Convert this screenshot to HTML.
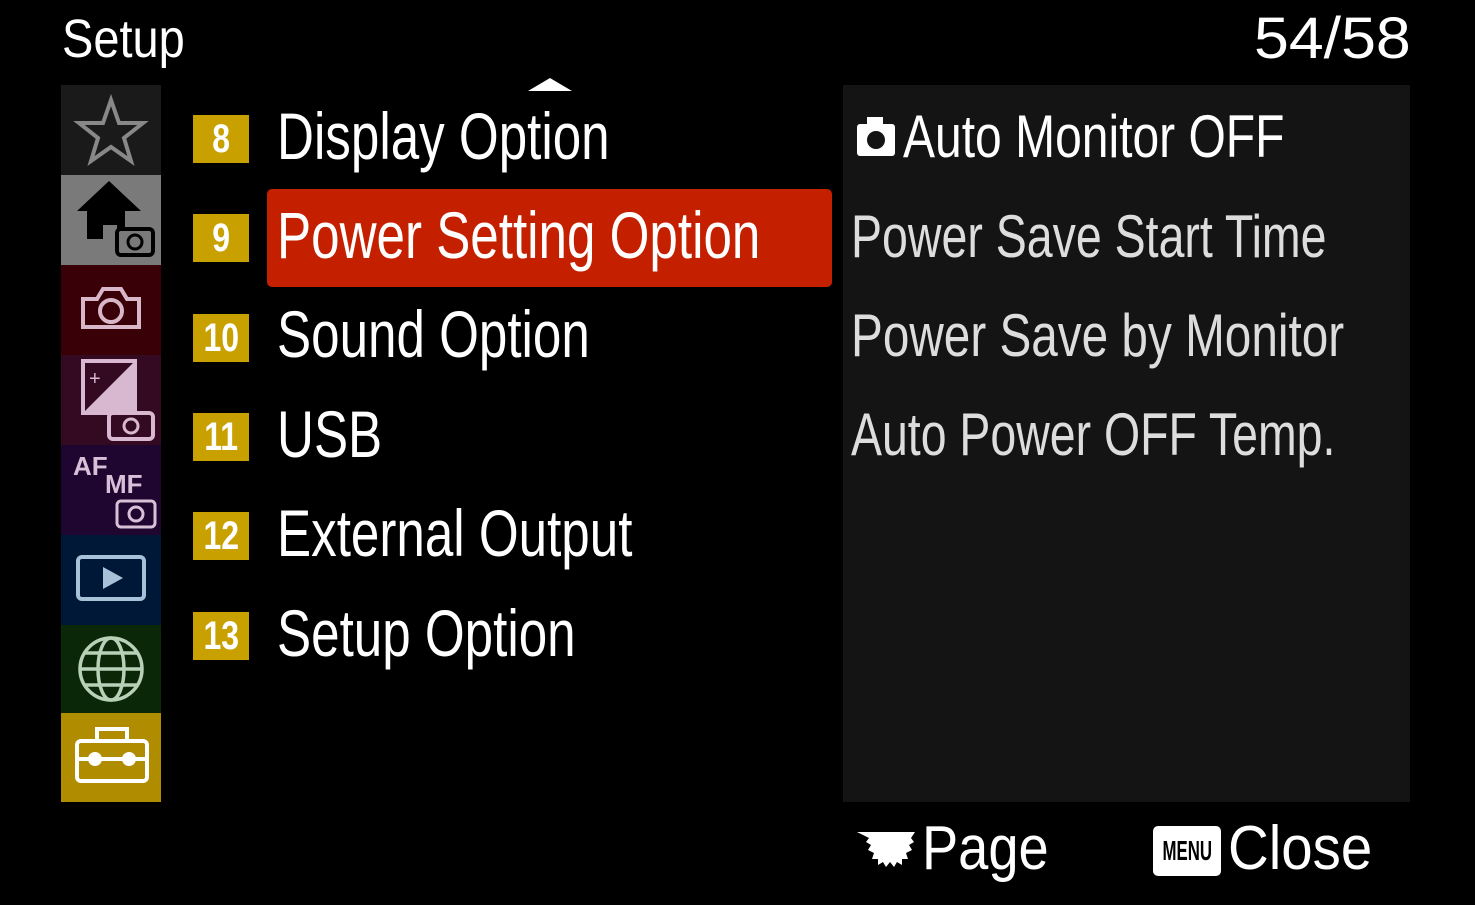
<!DOCTYPE html>
<html><head><meta charset="utf-8"><style>
body{margin:0;width:1475px;height:905px;background:#000;overflow:hidden;position:relative;font-family:"Liberation Sans",sans-serif;color:#fff}
.t{position:absolute;white-space:nowrap;transform-origin:0 0;transform:scaleX(0.8);line-height:1}
.tile{position:absolute;left:61px;width:100px;height:90px}
.num{position:absolute;left:193px;width:56px;height:48px;background:#c8a000;color:#fff;font-size:40px;line-height:48px;text-align:center;font-weight:bold}
.num span{display:inline-block;transform:scaleX(0.8)}
.m{font-size:66px;transform:scaleX(0.775)}
</style></head><body>
<div class="t" style="left:62px;top:12px;font-size:54px;transform:scaleX(0.87)">Setup</div>
<div class="t" style="left:1254px;top:10px;font-size:58px;transform:scaleX(1.08)">54/58</div>
<div style="position:absolute;left:528px;top:78px;width:0;height:0;border-left:22px solid transparent;border-right:22px solid transparent;border-bottom:13px solid #fff"></div>

<div class="tile" style="top:85px;background:#1a1a1a"><svg width="100" height="90"><polygon points="50,15 58,38 82,38 63,53 70,76 50,62 30,76 37,53 18,38 42,38" fill="none" stroke="#888" stroke-width="4"/></svg></div>
<div class="tile" style="top:175px;background:#7a7a7a"><svg width="100" height="90"><polygon points="48,6 16,36 26,36 26,64 42,64 42,50 56,50 56,64 64,64 64,36 80,36" fill="#000"/><rect x="56" y="54" width="36" height="26" rx="4" fill="#7a7a7a" stroke="#000" stroke-width="4"/><circle cx="74" cy="67" r="7" fill="none" stroke="#000" stroke-width="3"/></svg></div>
<div class="tile" style="top:265px;background:#3a0008"><svg width="100" height="90"><path d="M22 34h14l6-10h18l6 10h12v28H22z" fill="none" stroke="#d8b8c8" stroke-width="4"/><circle cx="50" cy="46" r="11" fill="none" stroke="#d8b8c8" stroke-width="4"/></svg></div>
<div class="tile" style="top:355px;background:#330a22"><svg width="100" height="90"><rect x="22" y="6" width="52" height="52" fill="none" stroke="#d8b8d0" stroke-width="4"/><polygon points="74,6 74,58 22,58" fill="#d8b8d0"/><text x="28" y="30" fill="#d8b8d0" font-size="20">+</text><rect x="48" y="58" width="44" height="26" rx="4" fill="#330a22" stroke="#d8b8d0" stroke-width="4"/><circle cx="70" cy="71" r="7" fill="none" stroke="#d8b8d0" stroke-width="3"/></svg></div>
<div class="tile" style="top:445px;background:#1e0630"><svg width="100" height="90"><text x="12" y="30" fill="#d8c0d8" font-size="26" font-weight="bold" font-family="Liberation Sans">AF</text><text x="44" y="48" fill="#d8c0d8" font-size="26" font-weight="bold" font-family="Liberation Sans">MF</text><rect x="56" y="56" width="38" height="26" rx="4" fill="none" stroke="#d8c0d8" stroke-width="3"/><circle cx="75" cy="69" r="7" fill="none" stroke="#d8c0d8" stroke-width="3"/></svg></div>
<div class="tile" style="top:535px;background:#001838"><svg width="100" height="90"><rect x="17" y="22" width="66" height="42" rx="4" fill="none" stroke="#a8c0d8" stroke-width="4"/><polygon points="42,32 62,43 42,54" fill="#a8c0d8"/></svg></div>
<div class="tile" style="top:625px;background:#0a2808"><svg width="100" height="90" fill="none" stroke="#b8d0b8" stroke-width="3.5"><circle cx="50" cy="44" r="31"/><ellipse cx="50" cy="44" rx="13" ry="31"/><line x1="19" y1="44" x2="81" y2="44"/><path d="M24 28h52M24 60h52"/></svg></div>
<div class="tile" style="top:713px;height:89px;background:#b08c00"><svg width="100" height="89" fill="none" stroke="#fff" stroke-width="4"><rect x="16" y="28" width="70" height="40" rx="4"/><rect x="36" y="16" width="30" height="12"/><line x1="16" y1="46" x2="86" y2="46"/><circle cx="34" cy="46" r="5" fill="#fff"/><circle cx="68" cy="46" r="5" fill="#fff"/></svg></div>

<div style="position:absolute;left:267px;top:189px;width:565px;height:98px;background:#c42000;border-radius:5px"></div>
<div class="num" style="top:115px"><span>8</span></div>
<div class="num" style="top:214px"><span>9</span></div>
<div class="num" style="top:314px"><span>10</span></div>
<div class="num" style="top:413px"><span>11</span></div>
<div class="num" style="top:512px"><span>12</span></div>
<div class="num" style="top:612px"><span>13</span></div>
<div class="t m" style="left:277px;top:103px">Display Option</div>
<div class="t m" style="left:277px;top:202px">Power Setting Option</div>
<div class="t m" style="left:277px;top:301px">Sound Option</div>
<div class="t m" style="left:277px;top:401px">USB</div>
<div class="t m" style="left:277px;top:500px">External Output</div>
<div class="t m" style="left:277px;top:600px">Setup Option</div>

<div style="position:absolute;left:843px;top:85px;width:567px;height:717px;background:#141414"></div>
<svg style="position:absolute;left:855px;top:114px" width="42" height="44"><rect x="2" y="10" width="38" height="32" rx="3" fill="#fff"/><rect x="12" y="3" width="16" height="10" fill="#fff"/><circle cx="21" cy="26" r="9" fill="#141414"/></svg>
<div class="t" style="left:903px;top:107px;font-size:60px;transform:scaleX(0.8);color:#fff">Auto Monitor OFF</div>
<div class="t" style="left:851px;top:207px;font-size:60px;transform:scaleX(0.775);color:#ddd">Power Save Start Time</div>
<div class="t" style="left:851px;top:306px;font-size:60px;transform:scaleX(0.795);color:#ddd">Power Save by Monitor</div>
<div class="t" style="left:851px;top:405px;font-size:60px;transform:scaleX(0.774);color:#ddd">Auto Power OFF Temp.</div>

<svg style="position:absolute;left:853px;top:828px" width="66" height="44"><path d="M4 4h58l-4 6 3 4-5 3 3 5-6 3 2 6-6 0 0 6-5-3-3 5-4-5-4 5-3-5-5 3 0-6-6 0 2-6-6-3 3-5-5-3 3-4z" fill="#fff"/></svg>
<div class="t" style="left:922px;top:818px;font-size:62px;transform:scaleX(0.875)">Page</div>
<div style="position:absolute;left:1153px;top:826px;width:68px;height:50px;background:#fff;border-radius:5px;color:#000;font-size:28px;font-weight:bold;line-height:50px;text-align:center;overflow:hidden;white-space:nowrap"><span style="display:inline-block;transform:scaleX(0.6);margin:0 -20px">MENU</span></div>
<div class="t" style="left:1228px;top:818px;font-size:62px;transform:scaleX(0.91)">Close</div>
</body></html>
